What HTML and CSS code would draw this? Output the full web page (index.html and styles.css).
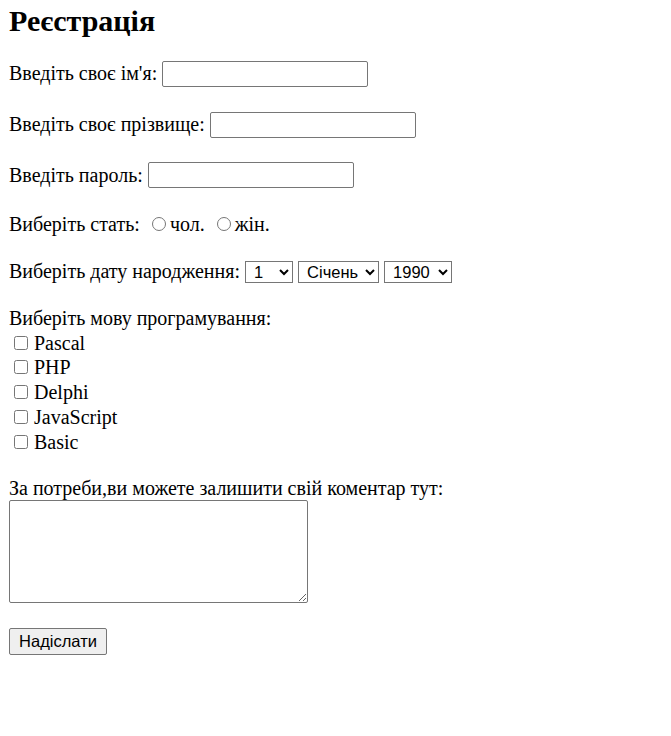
FILE: index.html
```html
<!DOCTYPE html>
<html lang="uk">
<head>
<meta charset="utf-8">
<title>Реєстрація</title>
<link rel="stylesheet" href="styles.css">
</head>
<body>
<form class="page">
  <h1 class="title">Реєстрація</h1>
  <div class="row row-first">
    <span>Введіть своє ім'я:</span>
    <input class="text-input" type="text">
  </div>
  <div class="row">
    <span>Введіть своє прізвище:</span>
    <input class="text-input" type="text">
  </div>
  <div class="row">
    <span>Введіть пароль:</span>
    <input class="text-input" type="password">
  </div>
  <div class="line radio-row">Виберіть стать: <input class="radio" type="radio" name="sex">чол. <input class="radio" type="radio" name="sex">жін.</div>
  <div class="select-row">
    <span>Виберіть дату народження:</span>
    <select class="sel sel-day"><option>1</option></select>
    <select class="sel sel-month"><option>Січень</option></select>
    <select class="sel sel-year"><option>1990</option></select>
  </div>
  <div class="line lang-label">Виберіть мову програмування:</div>
  <div class="checks">
    <label class="check-row"><input class="cb" type="checkbox"> Pascal</label>
    <label class="check-row"><input class="cb" type="checkbox"> PHP</label>
    <label class="check-row"><input class="cb" type="checkbox"> Delphi</label>
    <label class="check-row"><input class="cb" type="checkbox"> JavaScript</label>
    <label class="check-row"><input class="cb" type="checkbox"> Basic</label>
  </div>
  <div class="line comment-label">За потреби,ви можете залишити свій коментар тут:</div>
  <textarea class="comment"></textarea>
  <div class="actions"><button class="submit" type="button">Надіслати</button></div>
</form>
</body>
</html>
```
FILE: styles.css
```css
html, body {
  margin: 0;
  padding: 0;
  background: #ffffff;
}

body {
  font-family: "Liberation Serif", "Times New Roman", serif;
  font-size: 20px;
  color: #000000;
}

.page {
  display: flex;
  flex-direction: column;
  align-items: flex-start;
  padding: 3.6px 9px 0;
}

.title {
  font-family: "Liberation Serif", serif;
  font-size: 30px;
  font-weight: bold;
  line-height: 34.5px;
  margin: 0;
}

.row {
  display: flex;
  align-items: center;
  column-gap: 5px;
  height: 26px;
  margin-top: 24.6px;
}

.row-first {
  margin-top: 22.9px;
}

.text-input {
  box-sizing: border-box;
  width: 206px;
  height: 26px;
  margin: 0;
  padding: 1px 3px;
  border: 1px solid #767676;
  border-radius: 2px;
  background: #ffffff;
  font-family: "Liberation Sans", Arial, sans-serif;
  font-size: 16px;
}

.line {
  line-height: 23px;
  height: 23px;
  white-space: nowrap;
}

.radio-row {
  margin-top: 24.45px;
}

.radio {
  width: 14px;
  height: 14px;
  margin: 3px 4px 0 7px;
  vertical-align: baseline;
}

.select-row {
  display: flex;
  align-items: center;
  column-gap: 5px;
  height: 22px;
  margin-top: 25.25px;
}

.sel {
  box-sizing: border-box;
  height: 22px;
  margin: 0;
  padding: 0 0 0 4px;
  border: 1px solid #767676;
  border-radius: 0;
  background: #ffffff;
  font-family: "Liberation Sans", Arial, sans-serif;
  font-size: 16.5px;
  color: #000000;
}

.sel-day { width: 48px; }
.sel-month { width: 81px; }
.sel-year { width: 68px; }

.lang-label {
  margin-top: 23.75px;
}

.checks {
  display: flex;
  flex-direction: column;
  margin-top: 1px;
}

.check-row {
  line-height: 24.8px;
  height: 24.8px;
  white-space: nowrap;
}

.cb {
  width: 14px;
  height: 14px;
  margin: 0 1px 1px 5px;
  vertical-align: baseline;
}

.comment-label {
  margin-top: 22px;
}

.comment {
  box-sizing: border-box;
  width: 299px;
  height: 103px;
  margin: 0.3px 0 0;
  padding: 2px;
  border: 1px solid #767676;
  border-radius: 2px;
  resize: both;
  font-family: "Liberation Mono", monospace;
  font-size: 13px;
}

.actions {
  margin-top: 25px;
}

.submit {
  box-sizing: border-box;
  width: 98px;
  height: 27px;
  margin: 0;
  padding: 1px 6px;
  border: 1px solid #767676;
  border-radius: 2px;
  background: #efefef;
  font-family: "Liberation Sans", Arial, sans-serif;
  font-size: 16.5px;
  color: #000000;
}
```
